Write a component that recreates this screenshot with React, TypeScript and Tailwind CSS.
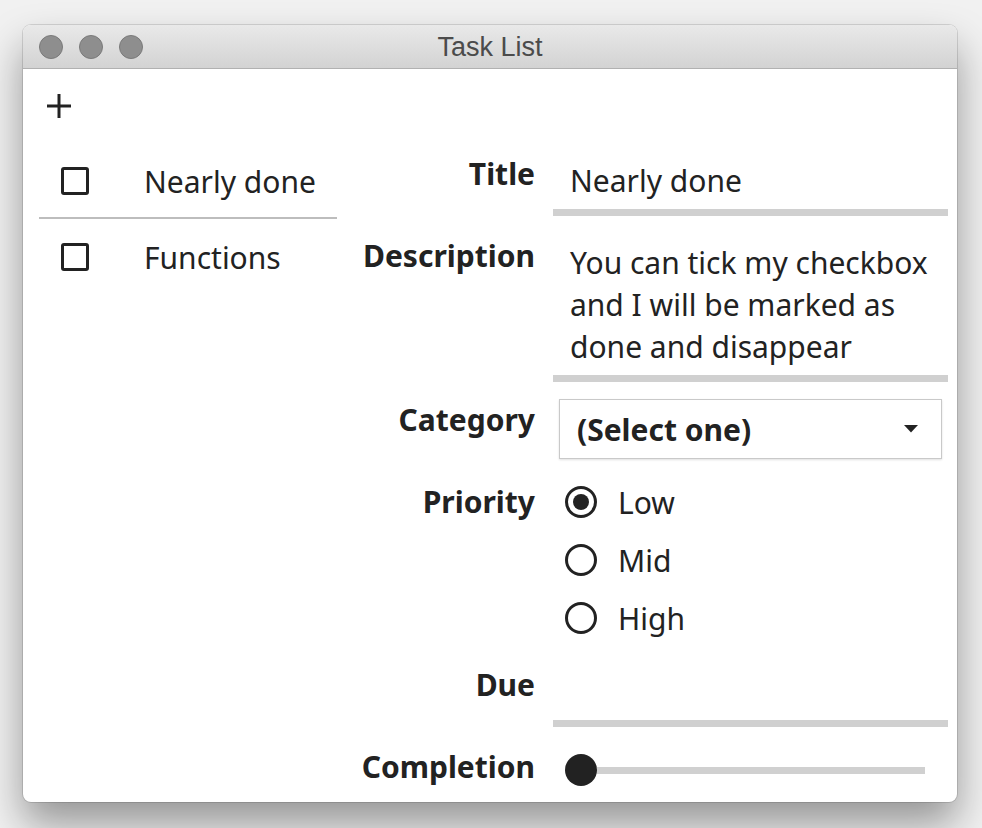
import React, { useState } from 'react';

const font = { fontFamily: '"Noto Sans", "Open Sans", sans-serif' };

function TrafficLight() {
  return <div className="w-[24px] h-[24px] rounded-full bg-[#8e8e8e] border border-[#7a7a7a]" />;
}

function Checkbox() {
  return <div className="w-[28px] h-[28px] rounded-[3px] border-[3px] border-[#222] bg-white" />;
}

function Radio({ checked }: { checked?: boolean }) {
  return (
    <div className="w-[32px] h-[32px] rounded-full border-[3px] border-[#222] flex items-center justify-center">
      {checked && <div className="w-[16px] h-[16px] rounded-full bg-[#222]" />}
    </div>
  );
}

function Label({ children, className = '' }: { children: React.ReactNode; className?: string }) {
  return (
    <div className={`w-[199px] shrink-0 text-right font-bold h-[42px] leading-[42px] ${className}`}>{children}</div>
  );
}

export default function App() {
  const [priority, setPriority] = useState('Low');
  const tasks = ['Nearly done', 'Functions'];

  return (
    <div className="w-[982px] h-[828px] bg-[#f1f1f1] pt-[25px] pl-[23px] overflow-hidden">
      <div className="w-[934px] h-[777px] rounded-[8px] bg-white flex flex-col overflow-hidden shadow-[0_22px_40px_rgba(0,0,0,0.38),0_0_0_1px_rgba(0,0,0,0.12)]">
        {/* title bar */}
        <div className="relative h-[44px] shrink-0 bg-gradient-to-b from-[#e9e9e9] to-[#d3d3d3] border-b border-[#b1b1b1] flex items-center pl-[16px] gap-[16px]">
          <TrafficLight />
          <TrafficLight />
          <TrafficLight />
          <div className="absolute inset-0 pt-[2px] flex items-center justify-center text-[27px] text-[#4b4b4b]" style={{ fontFamily: '"Liberation Sans", Arial, sans-serif' }}>
            Task List
          </div>
        </div>

        <div className="flex-1 flex text-[#222] text-[30px]" style={font}>
          {/* left list */}
          <div className="w-[313px] shrink-0 pl-[16px] flex flex-col">
            <div className="pt-[25px] pl-[8px] h-[76px]">
              <svg width="24" height="24" viewBox="0 0 24 24">
                <path d="M12 0v24M0 12h24" stroke="#222" strokeWidth="3" />
              </svg>
            </div>
            {tasks.map((t, i) => (
              <div key={t}>
                {i > 0 && <div className="h-[2px] bg-[#bdbdbd] w-[298px]" />}
                <div className={`flex items-center ${i === 0 ? 'h-[72px]' : 'h-[76px]'}`}>
                  <div className="w-[105px] pl-[22px]">
                    <Checkbox />
                  </div>
                  <span>{t}</span>
                </div>
              </div>
            ))}
          </div>

          {/* form */}
          <div className="flex-1 flex flex-col">
            <div className="flex gap-[18px] mt-[84px]">
              <Label>Title</Label>
              <div className="flex-1 pr-[9px]">
                <div className="pt-[7px] pl-[17px] h-[49px] leading-[42px]">Nearly done</div>
                <div className="mt-[7px] h-[7px] bg-[#d0d0d0]" />
              </div>
            </div>

            <div className="flex gap-[18px] mt-[19px]">
              <Label>Description</Label>
              <div className="flex-1 pr-[9px]">
                <div className="pt-[7px] pl-[17px] leading-[42px]">
                  You can tick my checkbox
                  <br />
                  and I will be marked as
                  <br />
                  done and disappear
                </div>
                <div className="mt-[7px] h-[7px] bg-[#d0d0d0]" />
              </div>
            </div>

            <div className="flex gap-[18px] mt-[17px]">
              <Label>Category</Label>
              <div className="flex-1 pl-[6px] pr-[15px]">
                <div className="h-[60px] border border-[#c9c9c9] shadow-[0_1px_2px_rgba(0,0,0,0.12)] flex items-center justify-between pl-[17px] pr-[23px] font-bold">
                  <span>(Select one)</span>
                  <svg width="14" height="8" viewBox="0 0 14 8">
                    <path d="M0 0h14L7 7.5z" fill="#222" />
                  </svg>
                </div>
              </div>
            </div>

            <div className="flex gap-[18px] mt-[22px]">
              <Label>Priority</Label>
              <div className="flex-1 flex flex-col gap-[16px] pl-[12px]">
                {['Low', 'Mid', 'High'].map(p => (
                  <div key={p} className="h-[42px] flex items-center gap-[21px] cursor-pointer" onClick={() => setPriority(p)}>
                    <Radio checked={priority === p} />
                    <span>{p}</span>
                  </div>
                ))}
              </div>
            </div>

            <div className="flex gap-[18px] mt-[25px]">
              <Label>Due</Label>
              <div className="flex-1 pr-[9px]">
                <div className="h-[56px]" />
                <div className="h-[7px] bg-[#d0d0d0]" />
              </div>
            </div>

            <div className="flex gap-[18px] mt-[19px]">
              <Label>Completion</Label>
              <div className="flex-1 h-[42px] mt-[3px] flex items-center pl-[12px] pr-[32px]">
                <div className="w-[32px] h-[32px] rounded-full bg-[#222] shrink-0" />
                <div className="flex-1 h-[7px] bg-[#d0d0d0]" />
              </div>
            </div>
          </div>
        </div>
      </div>
    </div>
  );
}
